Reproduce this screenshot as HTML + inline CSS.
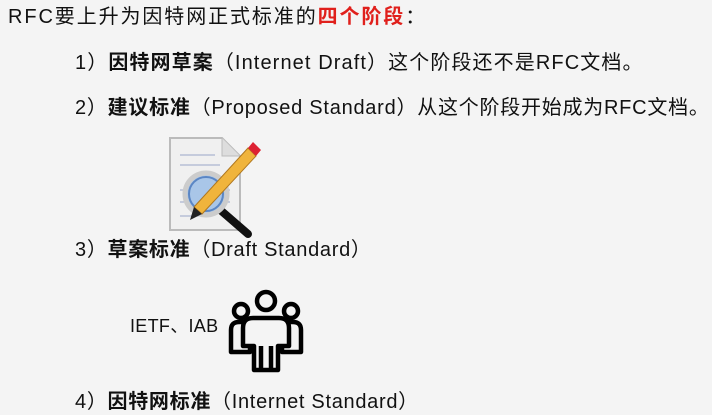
<!DOCTYPE html>
<html><head><meta charset="utf-8"><style>
body{margin:0;width:712px;height:415px;background:#f4f4f4;overflow:hidden;position:relative;font-family:"Liberation Sans","Noto Sans CJK SC",sans-serif;color:#111;font-size:20px}
.l{position:absolute;white-space:nowrap;line-height:24px;letter-spacing:0.7px}
b{font-weight:bold}
.r{color:#e0201c;font-weight:bold}
</style></head><body>
<div class="l" style="left:8px;top:5px;letter-spacing:1.9px">RFC要上升为因特网正式标准的<span class="r">四个阶段</span>：</div>
<div class="l" style="left:75px;top:51px;letter-spacing:1.1px">1）<b>因特网草案</b>（Internet Draft）这个阶段还不是RFC文档。</div>
<div class="l" style="left:75px;top:96px;letter-spacing:0.75px">2）<b>建议标准</b>（Proposed Standard）从这个阶段开始成为RFC文档。</div>
<div class="l" style="left:75px;top:238px">3）<b>草案标准</b>（Draft Standard）</div>
<div class="l" style="left:130px;top:314px;font-size:18px;letter-spacing:0.3px">IETF、IAB</div>
<div class="l" style="left:75px;top:390px">4）<b>因特网标准</b>（Internet Standard）</div>
<svg style="position:absolute;left:160px;top:130px" width="105" height="108" viewBox="0 0 105 108">
<path d="M10 8 H62 L80 26 V100 H10 Z" fill="#f0f0f0" stroke="#bbb" stroke-width="2"/>
<path d="M62 8 V26 H80" fill="#ddd" stroke="#bbb"/>
<g stroke="#9aa6c8" stroke-width="1"><line x1="20" y1="25" x2="55" y2="25"/><line x1="20" y1="35" x2="60" y2="35"/><line x1="20" y1="60" x2="70" y2="60"/><line x1="20" y1="72" x2="70" y2="72"/><line x1="20" y1="86" x2="45" y2="86"/></g>
<line x1="58" y1="78" x2="88" y2="104" stroke="#111" stroke-width="8" stroke-linecap="round"/>
<circle cx="46" cy="64" r="21" fill="#a9c6e8" stroke="#ccc" stroke-width="5"/>
<circle cx="46" cy="64" r="17" fill="none" stroke="#5b86c4" stroke-width="2"/>
<path d="M34 77 L88 18 L96 26 L42 84 Z" fill="#f0b43c" stroke="#b07820"/>
<path d="M88 18 L93 12 L101 20 L96 26 Z" fill="#d23"/>
<path d="M34 77 L30 90 L42 84 Z" fill="#222"/>
</svg>
<svg style="position:absolute;left:228px;top:288px" width="76" height="86" viewBox="0 0 76 86" fill="#f4f4f4" stroke="#000" stroke-width="4.5" stroke-linejoin="round">
<circle cx="13" cy="23" r="7"/><circle cx="63" cy="23" r="7"/>
<path d="M3 64 V42 Q3 34 11 34 H22 V64 Z"/>
<path d="M73 64 V42 Q73 34 65 34 H54 V64 Z"/>
<circle cx="38" cy="13" r="9"/>
<path d="M15 58 V40 Q15 30 25 30 H51 Q61 30 61 40 V58 H50 V82 H26 V58 Z"/>
<path d="M33 82 V58 M43 82 V58" fill="none"/>
</svg>
</body></html>
